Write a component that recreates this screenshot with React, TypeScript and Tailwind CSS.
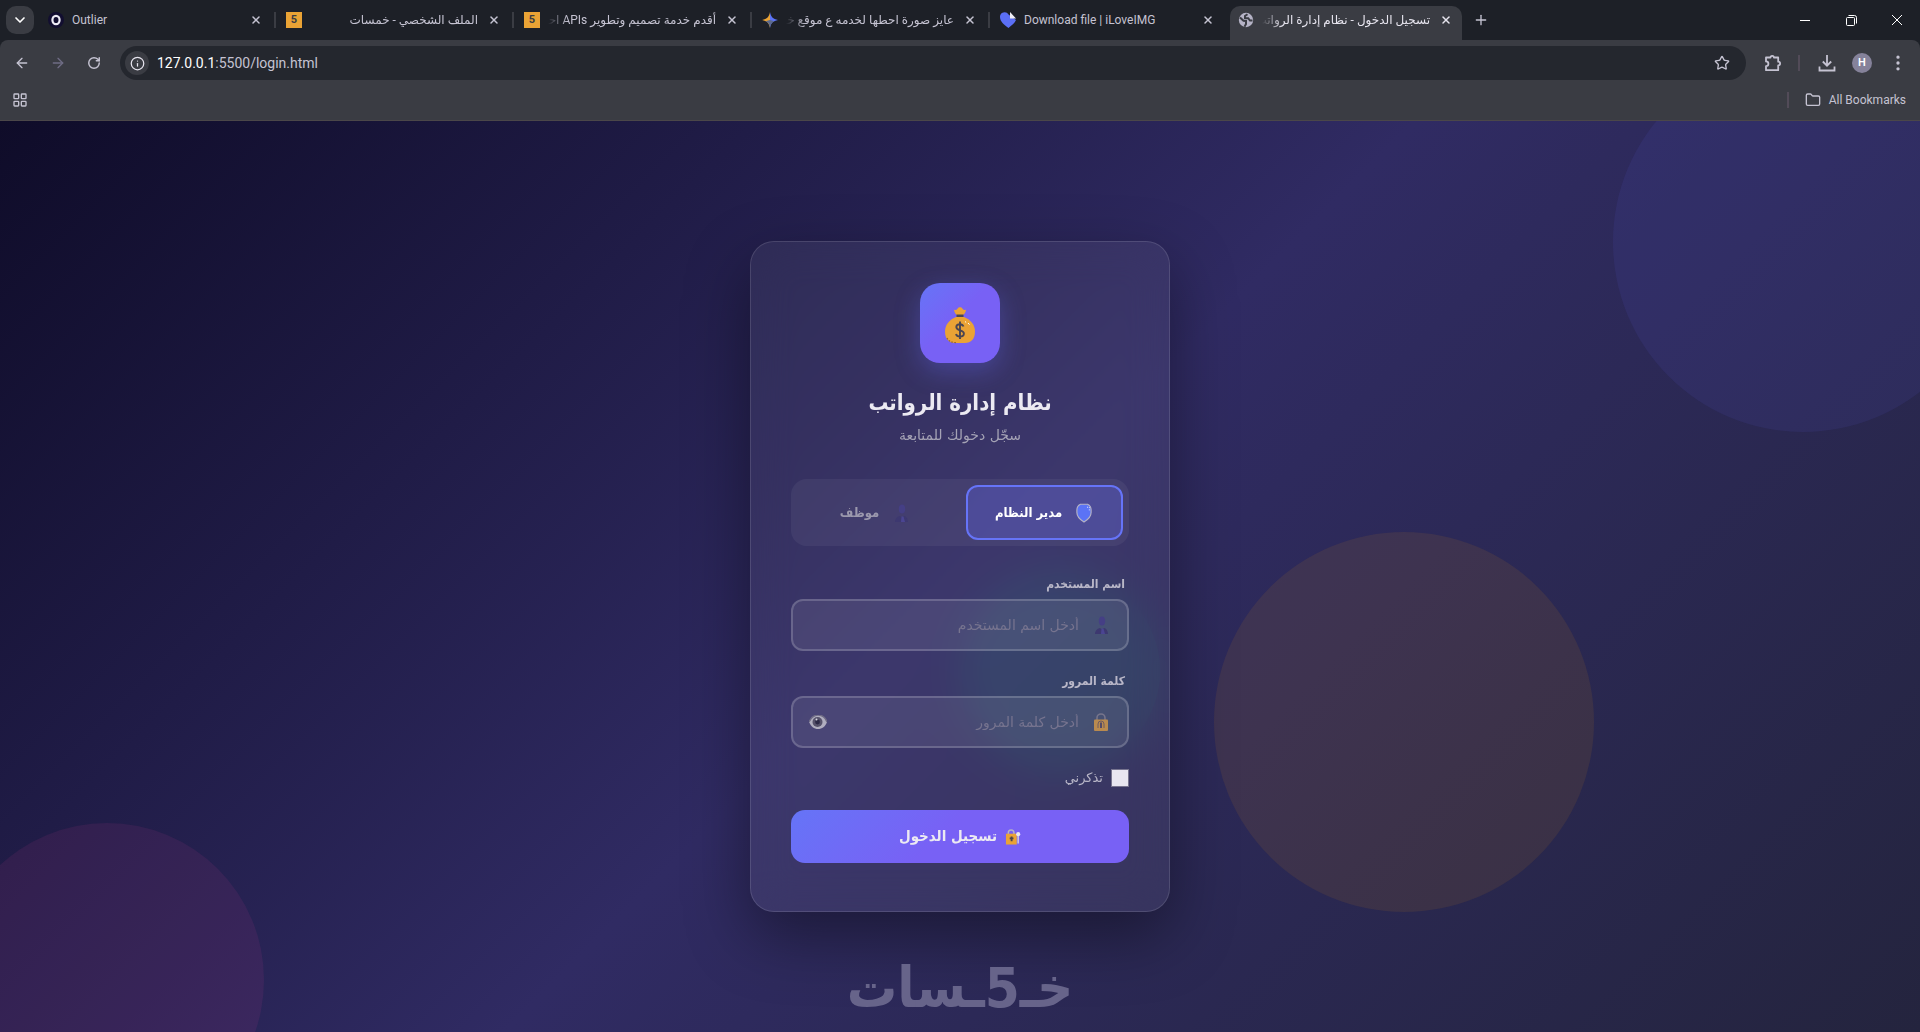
import React, { useState } from 'react';
import { ArrowLeft, ArrowRight, ChevronDown, Folder, Info, LayoutGrid, MoreVertical, Plus, RotateCw, Star, X } from 'lucide-react';

type Role = 'admin' | 'employee';

type BrowserTab = {
  title: string;
  rtl?: boolean;
  icon: React.ReactNode;
  active?: boolean;
};

const KhamsatIcon = () => (
  <span className="flex size-4 items-center justify-center bg-[#eaa335] text-[11px] leading-4 font-bold text-[#3a3c43]">5</span>
);

const OutlierIcon = () => (
  <svg viewBox="0 0 16 16" className="size-4">
    <circle cx="8" cy="8" r="8" fill="#120e30" />
    <ellipse cx="8" cy="8" rx="3.6" ry="4.2" fill="none" stroke="#eceaf4" strokeWidth="2.2" />
  </svg>
);

const SparkIcon = () => (
  <svg viewBox="0 0 16 16" className="size-4">
    <path d="M8 0c.7 4.500 3 7.200 8 8-5 .8-7.300 3.500-8 8z" fill="#5b73f5" />
    <path d="M8 0C7.300 4.500 5 7.200 0 8c5 .8 7.300 3.500 8 8z" fill="#eaa335" />
    <path d="M3.500 9.300C6.200 10.200 7.500 12.200 8 16c.5-3.800 1.800-5.800 4.500-6.700L8 8z" fill="#5d6a8c" />
  </svg>
);

const HeartIcon = () => (
  <svg viewBox="0 0 16 16" className="size-4">
    <path d="M8.500 16C4 12.500 0 9.500 0 5a4.600 4.600 0 0 1 8.500-2.600L16 8c-1.200 3-4.500 5.500-7.500 8z" fill="#5b6ff5" />
    <path d="M10 0v6.500h6z" fill="#f0eef6" />
  </svg>
);

const GlobeIcon = () => (
  <svg viewBox="0 0 16 16" className="size-4">
    <circle cx="8" cy="8" r="7.200" fill="#b5b3c6" />
    <path d="M2 5.500l3.500 3.200 2.500.3v3l-1.500 2.700M9.500 2.200L7 4v2.200h3.200L12 8.500h2.500" fill="none" stroke="#3a3c43" strokeWidth="2" />
  </svg>
);

const ExtensionIcon = () => (
  <svg viewBox="0 0 18 18" className="size-[18px]" fill="none" stroke="currentColor" strokeWidth="1.800">
    <path d="M2 3.500h4.500a1.700 1.700 0 0 1 3.400 0h4.300v4.200a1.900 1.900 0 0 1 0 3.800v4.700H2v-4a2.400 2.400 0 0 0 0-4.800z" strokeLinejoin="round" />
  </svg>
);

const DownloadIcon = () => (
  <svg viewBox="0 0 18 18" className="size-[18px]" fill="none" stroke="currentColor" strokeWidth="1.800">
    <path d="M9 1v10.500M4.800 7.500L9 11.700l4.200-4.200M1.500 12.500v4h15v-4" />
  </svg>
);

const tabs: BrowserTab[] = [
  { title: 'Outlier', icon: <OutlierIcon /> },
  { title: 'الملف الشخصي - خمسات', rtl: true, icon: <KhamsatIcon /> },
  { title: 'أقدم خدمة تصميم وتطوير APIs احترافية', rtl: true, icon: <KhamsatIcon /> },
  { title: 'عايز صورة احطها لخدمه ع موقع خمسات', rtl: true, icon: <SparkIcon /> },
  { title: 'Download file | iLoveIMG', icon: <HeartIcon /> },
  { title: 'تسجيل الدخول - نظام إدارة الرواتب', rtl: true, icon: <GlobeIcon />, active: true },
];

const MoneyBag = () => (
  <svg viewBox="0 -4 32 42" className="h-[42px] w-8">
    <path d="M10 3.500c1.500 1 2.500.5 3.500-.8C14.800.8 17.200.8 18.500 2.700c1 1.300 2 1.800 3.500.8-.2 2.600-1.300 4.300-2.800 5.500h-6.400C11.300 7.800 10.200 6.100 10 3.500z" fill="#eaa335" />
    <path d="M12.500 8.500h7v2.500h-7z" fill="#4a4652" />
    <path d="M12 11h8c7 3 11 8 11 14.500C31 33 27 37 21 37H11C5 37 1 33 1 25.500 1 19 5 14 12 11z" fill="#eaa335" />
    <path d="M19.500 20.500c-.6-1.600-1.800-2.300-3.500-2.300-2.200 0-3.700 1.100-3.700 2.900 0 4.200 7.600 2.200 7.600 6.300 0 1.900-1.600 3.100-3.900 3.100-2 0-3.500-.9-4-2.600M16 15.500v17.500" fill="none" stroke="#4a4652" strokeWidth="1.900" />
    <path d="M21 15.500l1.200 1M24 17l1.500 1.600" stroke="#fff" strokeWidth="1" />
    <path d="M3 32c2 3.500 5 4.500 9 4.600" fill="none" stroke="#8f642b" strokeWidth="1.200" strokeDasharray="1.500 1.500" />
  </svg>
);

const ShieldIcon = () => (
  <svg viewBox="0 0 18 22" className="h-5 w-4">
    <path d="M5 1.200h8c2.600 1.300 4 3.300 4 6.300v3c0 4.500-3.500 8-8 10.700C4.500 18.500 1 15 1 10.500v-3c0-3 1.400-5 4-6.300z" fill="#5b73f5" stroke="#b5b3c6" strokeWidth="1.300" />
    <path d="M12.500 4.500h2.500v4" fill="none" stroke="#fff" strokeWidth="1" strokeDasharray="1 1.500" />
  </svg>
);

const PersonIcon = () => (
  <svg viewBox="0 0 16 18" className="h-4.5 w-4">
    <ellipse cx="9" cy="5" rx="3.200" ry="4.500" fill="#453f85" />
    <path d="M2 18c.2-4 3-5.500 5-6l2 1.500 2-1.500c2 .5 3.800 2 4 6z" fill="#3d3870" />
    <path d="M8.500 12.500h2L12 18H8z" fill="#4b4592" />
  </svg>
);

const LockIcon = () => (
  <svg viewBox="0 0 14 18" className="h-4.5 w-3.5">
    <path d="M3 8V5a4 4 0 0 1 8 0v3" fill="none" stroke="#77758c" strokeWidth="1.600" />
    <rect y="6.500" width="14" height="11.500" rx="1" fill="#b98a4f" />
    <path d="M4 15V11a3 3 0 0 1 6 0v4" fill="none" stroke="#6f5a60" strokeWidth="1" />
    <path d="M6 9.500h2V15H6z" fill="#544a66" />
  </svg>
);

const LockKeyIcon = () => (
  <svg viewBox="0 0 17 17" className="size-4">
    <path d="M3.500 6V4a3 3 0 0 1 6 0v2" fill="none" stroke="#b5b3c6" strokeWidth="1.600" />
    <path d="M1 5h11.500v11.500H1z" fill="#eaa335" />
    <path d="M6 8h2v5H6zM5 9h4v2H5z" fill="#4a4652" />
    <circle cx="14" cy="5.500" r="2.200" fill="#e9e7f1" />
    <path d="M13.200 7.500h1.600v8h-1.600z" fill="#cfcddb" />
  </svg>
);

const EyeIcon = () => (
  <svg viewBox="0 0 18 14" className="h-3.5 w-4.5">
    <path d="M0 7c2-4.500 5-7 9-7s7.500 2.500 9 7c-1.500 4.500-5 7-9 7S2 11.500 0 7z" fill="#b0aebf" />
    <path d="M0 7c2-4.500 5-7 9-7s7.500 2.500 9 7" fill="none" stroke="#6f6c85" strokeWidth="1.400" />
    <circle cx="8.500" cy="7" r="5" fill="#56526b" />
    <circle cx="8.500" cy="7" r="2.400" fill="#2c2946" />
    <circle cx="7.500" cy="4.500" r="1" fill="#d9d7e2" />
  </svg>
);

const Tab: React.FC<{ tab: BrowserTab }> = ({ tab }) => (
  <div className="flex w-[238px] min-w-0 px-[3px]">
    <div
      className={`flex min-w-0 flex-1 items-center gap-2 rounded-t-[10px] px-2 ${
        tab.active ? 'h-[34px] bg-[#3a3c43] pb-[6px] text-[#e6e4ee]' : 'h-[28px] text-[#c5c3d2]'
      }`}
    >
      <span className="shrink-0">{tab.icon}</span>
      <span
        dir={tab.rtl ? 'rtl' : 'ltr'}
        className={`min-w-0 flex-1 overflow-hidden text-[12px] leading-5 whitespace-nowrap ${
          tab.rtl ? '[mask-image:linear-gradient(to_right,transparent,black_20px)]' : ''
        }`}
      >
        {tab.title}
      </span>
      <button type="button" aria-label="Close tab" className="flex size-4 shrink-0 items-center justify-center">
        <X className="size-3" strokeWidth={3} />
      </button>
    </div>
  </div>
);

const BrowserChrome = () => (
  <header className="bg-[#1d2027] font-[Roboto,'DejaVu_Sans',sans-serif] text-[#c5c3d2]">
    <div className="flex h-10 items-end">
      <button type="button" aria-label="Search tabs" className="mr-[3px] mb-[6px] ml-[6px] flex size-7 shrink-0 items-center justify-center rounded-[10px] bg-[#3a3c43] text-white">
        <ChevronDown className="size-4" strokeWidth={2.5} />
      </button>
      <nav className="flex h-[34px] min-w-0 items-start">
        {tabs.map((tab, index) => (
          <React.Fragment key={tab.title}>
            <Tab tab={tab} />
            {index < 4 && <span className="mt-[6px] -mr-[1px] -ml-[1px] h-4 w-[2px] shrink-0 bg-[#3a3c43]" />}
          </React.Fragment>
        ))}
      </nav>
      <button type="button" aria-label="New tab" className="mb-[6px] ml-[2px] flex size-7 items-center justify-center">
        <Plus className="size-4" />
      </button>
      <div className="ml-auto flex h-10 items-center text-white">
        <button type="button" aria-label="Minimize" className="flex w-[46px] justify-center">
          <svg viewBox="0 0 10 10" className="size-[10px]"><path d="M0 5.500h10" stroke="currentColor" /></svg>
        </button>
        <button type="button" aria-label="Restore" className="flex w-[46px] justify-center">
          <svg viewBox="0 0 11 11" className="size-[11px]" fill="none" stroke="currentColor">
            <rect x="0.500" y="2.500" width="8" height="8" rx="1" />
            <path d="M2.500.5h6a2 2 0 0 1 2 2v6" />
          </svg>
        </button>
        <button type="button" aria-label="Close" className="flex w-[46px] justify-center">
          <svg viewBox="0 0 10 10" className="size-[10px]"><path d="M0 0l10 10M10 0L0 10" stroke="currentColor" /></svg>
        </button>
      </div>
    </div>

    <div className="rounded-t-lg border-b border-[#4b4749] bg-[#3a3c43]">
      <div className="flex h-[46px] items-center pr-3 pl-3">
        <button type="button" aria-label="Back" className="flex w-5 justify-center"><ArrowLeft className="size-4" /></button>
        <button type="button" aria-label="Forward" className="ml-4 flex w-5 justify-center text-[#6f6c85]"><ArrowRight className="size-4" /></button>
        <button type="button" aria-label="Reload" className="ml-4 flex w-5 justify-center"><RotateCw className="size-[14px]" strokeWidth={2.5} /></button>
        <div className="ml-4 flex h-[34px] min-w-0 flex-1 items-center rounded-full bg-[#24272e] pr-4 pl-[5px]">
          <span className="flex size-6 items-center justify-center rounded-full bg-[#3a3c43] text-[#e6e4ee]">
            <Info className="size-[15px]" />
          </span>
          <span className="ml-2 flex-1 text-[14px] leading-5">
            <span className="text-white">127.0.0.1</span>:5500/login.html
          </span>
          <button type="button" aria-label="Bookmark this page"><Star className="size-4" /></button>
        </div>
        <button type="button" aria-label="Extensions" className="ml-[18px]"><ExtensionIcon /></button>
        <span className="ml-4 h-4 w-[2px] bg-[#524b58]" />
        <button type="button" aria-label="Downloads" className="ml-[18px]"><DownloadIcon /></button>
        <button type="button" aria-label="Profile" className="ml-4 size-5 rounded-full bg-[#85829a] text-[11px] leading-5 font-semibold text-white">H</button>
        <button type="button" aria-label="Menu" className="ml-4"><MoreVertical className="size-5" /></button>
      </div>
      <div className="flex h-[34px] items-center pr-[14px] pb-[6px] pl-3">
        <button type="button" aria-label="Apps"><LayoutGrid className="size-4" /></button>
        <span className="ml-auto h-4 w-[2px] bg-[#524b58]" />
        <button type="button" className="ml-4 flex items-center gap-2 text-[12px] leading-5">
          <Folder className="size-4" />
          All Bookmarks
        </button>
      </div>
    </div>
  </header>
);

type FieldProps = {
  id: string;
  label: string;
  placeholder: string;
  type: string;
  icon: React.ReactNode;
  action?: React.ReactNode;
};

const Field: React.FC<FieldProps> = ({ id, label, placeholder, type, icon, action }) => (
  <div>
    <label htmlFor={id} className="block px-1 font-['DejaVu_Sans_Condensed','DejaVu_Sans',sans-serif] text-[12px] leading-5 font-bold text-[#b9b7c8]">
      {label}
    </label>
    <div className="mt-[5px] flex h-[52px] items-center gap-3 rounded-xl border-2 border-white/18 bg-white/8 px-4">
      <span className="flex w-5 shrink-0 justify-center">{icon}</span>
      <input
        id={id}
        type={type}
        placeholder={placeholder}
        className="h-10 min-w-0 flex-1 bg-transparent text-[14px] leading-6 text-white outline-none placeholder:text-[#77748f]"
      />
      {action}
    </div>
  </div>
);

const LoginCard = () => {
  const [role, setRole] = useState<Role>('admin');
  const [showPassword, setShowPassword] = useState(false);

  const roleClass = (value: Role) =>
    `flex h-[55px] flex-1 items-center justify-center gap-3 rounded-xl border-2 font-['DejaVu_Sans_Condensed','DejaVu_Sans',sans-serif] text-[13px] font-bold ${
      role === value ? 'border-[#6674f8] bg-[#6366f1]/30 text-white' : 'border-transparent text-[#9b98ad]'
    }`;

  return (
    <form
      dir="rtl"
      className="relative w-full max-w-[420px] rounded-3xl border border-white/12 bg-white/6 px-10 pt-[41px] pb-12 shadow-[0_24px_64px_rgba(0,0,0,0.400)] backdrop-blur-[20px]"
    >
      <div className="mx-auto flex size-20 items-center justify-center rounded-[20px] bg-linear-135 from-[#6574f7] via-[#7861f5] via-45% to-[#7861f5] shadow-[0_8px_24px_rgba(99,102,241,0.350)]">
        <MoneyBag />
      </div>
      <h1 className="mt-5 text-center font-['DejaVu_Sans_Condensed','DejaVu_Sans',sans-serif] text-[22px] leading-10 font-bold text-[#eceaf2]">
        نظام إدارة الرواتب
      </h1>
      <p className="text-center text-[14px] leading-6 text-[#a5a3b5]">سجّل دخولك للمتابعة</p>

      <div className="mt-8 flex gap-3 rounded-2xl bg-white/5 p-[6px]">
        <button type="button" onClick={() => setRole('admin')} className={roleClass('admin')}>
          <span className="flex w-5 justify-center"><ShieldIcon /></span>
          مدير النظام
        </button>
        <button type="button" onClick={() => setRole('employee')} className={roleClass('employee')}>
          <span className="flex w-5 justify-center"><PersonIcon /></span>
          موظف
        </button>
      </div>

      <div className="mt-7 flex flex-col gap-5">
        <Field id="username" label="اسم المستخدم" placeholder="أدخل اسم المستخدم" type="text" icon={<PersonIcon />} />
        <Field
          id="password"
          label="كلمة المرور"
          placeholder="أدخل كلمة المرور"
          type={showPassword ? 'text' : 'password'}
          icon={<LockIcon />}
          action={
            <button type="button" aria-label="إظهار كلمة المرور" onClick={() => setShowPassword(!showPassword)}>
              <EyeIcon />
            </button>
          }
        />
      </div>

      <label className="mt-5 flex items-center gap-2 text-[13px] leading-5 text-[#b9b7c8]">
        <input type="checkbox" className="size-[18px] appearance-none border border-[#77748f] bg-[#e8e6f0] checked:bg-[#6366f1]" />
        تذكرني
      </label>

      <button
        type="submit"
        className="mt-[22px] flex h-[53px] w-full items-center justify-center gap-2 rounded-[14px] bg-linear-135 from-[#6574f7] via-[#7861f5] via-45% to-[#7861f5] font-['DejaVu_Sans_Condensed','DejaVu_Sans',sans-serif] text-[15px] font-bold text-[#eceaf2]"
      >
        <LockKeyIcon />
        تسجيل الدخول
      </button>
    </form>
  );
};

export default function App() {
  return (
    <div className="flex min-h-screen flex-col font-['DejaVu_Sans',sans-serif]">
      <BrowserChrome />
      <main className="relative flex flex-1 flex-col items-center justify-center overflow-hidden bg-linear-135 from-[#0f0c29] via-[#302b63] to-[#24243e] py-10">
        <span className="absolute -top-[69px] -right-[73px] size-[380px] rounded-full bg-[#6366f1]/9" />
        <span className="absolute right-[17%] bottom-[120px] size-[380px] rounded-full bg-[#f59e0b]/9" />
        <span className="absolute -bottom-[105px] -left-[50px] size-[314px] rounded-full bg-[#ec4899]/9" />
        <span className="absolute top-[450px] left-[50%] size-[200px] rounded-full bg-[#10b981]/10" />
        <LoginCard />
        <div
          dir="rtl"
          className="absolute bottom-2 font-['DejaVu_Sans_Condensed','DejaVu_Sans',sans-serif] text-[56px] leading-[72px] font-bold whitespace-nowrap text-[#67648a]"
        >
          خـ5ـسات
        </div>
      </main>
    </div>
  );
}
